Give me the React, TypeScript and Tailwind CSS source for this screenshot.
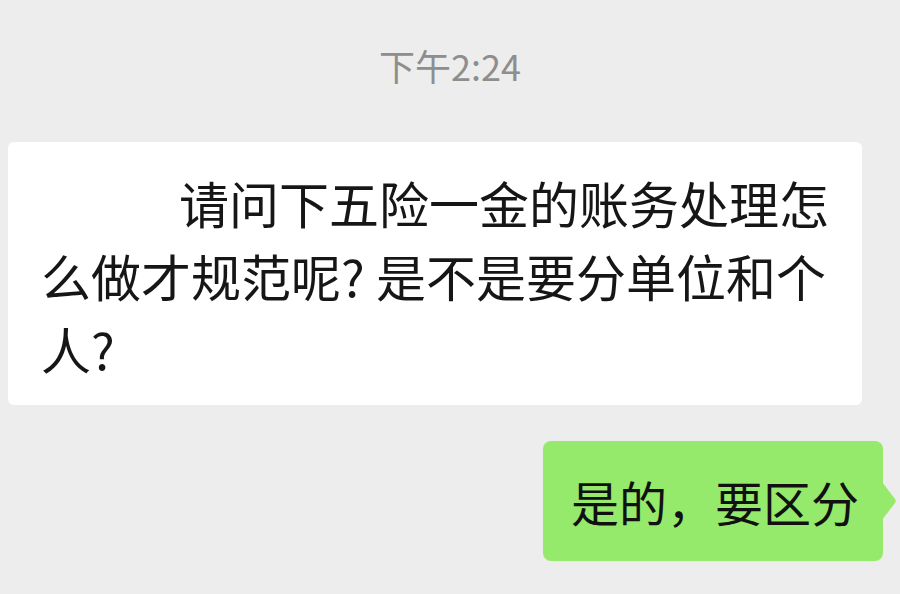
import React from "react";

const font = { fontFamily: '"Noto Sans CJK SC", "Noto Sans", sans-serif' };

export default function App() {
  return (
    <div
      className="w-[900px] h-[594px] bg-[#ededed] overflow-hidden flex flex-col"
      style={font}
    >
      <div className="h-[90px] pt-[40px] flex justify-center text-[36px] leading-[50px] text-[#8e8e8e]">
        下午2:24
      </div>
      <div className="mt-[52px] ml-[8px] w-[854px] bg-white rounded-[6px] pt-[24px] pb-[20px] pl-[33px] pr-[20px] text-[50px] leading-[73px] text-[#161616]">
        <div className="pl-[138px]">请问下五险一金的账务处理怎</div>
        <div className="whitespace-nowrap">么做才规范呢? 是不是要分单位和个</div>
        <div>人?</div>
      </div>
      <div className="mt-[36px] flex justify-end pr-[17px]">
        <div className="relative h-[120px] bg-[#95ea6b] rounded-[8px] pl-[28px] pr-[24px] flex items-center text-[48px] text-[#111]">
          <span className="leading-none">是的，要区分</span>
          <svg
            className="absolute right-[-14px] top-[41px]"
            width="15"
            height="38"
            viewBox="0 0 15 38"
          >
            <path d="M0 0 L13 17 Q14.5 19 13 21 L0 38 Z" fill="#95ea6b" />
          </svg>
        </div>
      </div>
    </div>
  );
}
